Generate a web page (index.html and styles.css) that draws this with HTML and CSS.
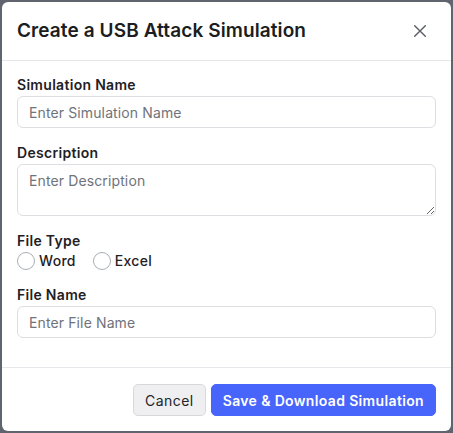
FILE: index.html
```
<!DOCTYPE html>
<html>
<head>
<meta charset="utf-8">
<link rel="stylesheet" href="styles.css">
</head>
<body>
<div class="backdrop">
  <div class="modal">
    <div class="modal-header">
      <h5 class="modal-title">Create a USB Attack Simulation</h5>
      <button class="close" aria-label="Close">
        <svg width="12" height="12" viewBox="0 0 12 12"><path d="M0.7 0.7 L11.3 11.3 M11.3 0.7 L0.7 11.3" stroke="#5a5d63" stroke-width="1.4" fill="none" stroke-linecap="round"/></svg>
      </button>
    </div>
    <div class="modal-body">
      <div class="group">
        <label class="label">Simulation Name</label>
        <input class="control" type="text" placeholder="Enter Simulation Name">
      </div>
      <div class="group">
        <label class="label">Description</label>
        <textarea class="control area" placeholder="Enter Description"></textarea>
      </div>
      <div class="group">
        <label class="label">File Type</label>
        <div class="radios">
          <label class="radio"><input type="radio" name="ft"><span>Word</span></label>
          <label class="radio"><input type="radio" name="ft"><span>Excel</span></label>
        </div>
      </div>
      <div class="group">
        <label class="label">File Name</label>
        <input class="control" type="text" placeholder="Enter File Name">
      </div>
    </div>
    <div class="modal-footer">
      <button class="btn btn-cancel">Cancel</button>
      <button class="btn btn-primary">Save &amp; Download Simulation</button>
    </div>
  </div>
</div>
</body>
</html>
```
FILE: styles.css
```
* { box-sizing: border-box; }
html, body { margin: 0; padding: 0; }
body {
  background: #60646e;
  font-family: "Inter", "Noto Sans", sans-serif;
  color: #212529;
  width: 453px;
  height: 433px;
  overflow: hidden;
}
.backdrop {
  padding: 2px;
}
.modal {
  width: 449px;
  height: 429px;
  background: #fff;
  border-radius: 6px;
  display: flex;
  flex-direction: column;
  overflow: hidden;
}
.modal-header {
  display: flex;
  align-items: center;
  justify-content: space-between;
  padding: 16px 15px;
  height: 59px;
  border-bottom: 1px solid #e6e7ea;
}
.modal-title {
  margin: 0;
  font-size: 19px;
  font-weight: 600;
  letter-spacing: 0.1px;
  line-height: 26px;
  color: #1b1d20;
}
.close {
  border: 0;
  background: transparent;
  padding: 0;
  width: 12px;
  height: 12px;
  margin-right: 10px;
  display: flex;
}
.modal-body {
  padding: 13px 15px 1px;
}
.group {
  margin-bottom: 14px;
}
.label {
  display: block;
  font-size: 14px;
  font-weight: 600;
  letter-spacing: 0.3px;
  line-height: 21px;
  margin-bottom: 1px;
  color: #1f2124;
}
.control {
  display: block;
  width: 100%;
  height: 32px;
  border: 1px solid #dcdee2;
  border-radius: 6px;
  padding: 0 11px;
  font-family: inherit;
  font-size: 14px;
  letter-spacing: 0.12px;
  color: #212529;
  background: #fff;
  outline: none;
}
.control::placeholder { color: #6f737a; opacity: 1; }
.area {
  height: 52px;
  padding: 5px 11px;
  line-height: 21px;
  resize: vertical;
}
.radios {
  display: flex;
  gap: 17px;
  height: 18px;
  align-items: center;
}
.radio {
  display: flex;
  align-items: center;
  gap: 4px;
  font-size: 14px;
  letter-spacing: 0.3px;
  font-weight: 500;
  color: #1f2124;
  line-height: 18px;
}
.radio input {
  appearance: none;
  -webkit-appearance: none;
  margin: 0;
  width: 18px;
  height: 18px;
  border: 1px solid #a9aeb5;
  border-radius: 50%;
  background: #fff;
}
.modal-footer {
  margin-top: auto;
  border-top: 1px solid #e6e7ea;
  padding: 16px 15px 15px;
  display: flex;
  justify-content: flex-end;
  gap: 5px;
}
.btn {
  height: 32px;
  border-radius: 5px;
  font-family: inherit;
  font-size: 14px;
  padding: 0 11px;
  cursor: pointer;
}
.btn-cancel {
  background: #efeff1;
  border: 1px solid #d6d8dc;
  color: #212529;
  letter-spacing: 0.45px;
  padding: 0 11px;
}
.btn-primary {
  background: #4764fb;
  border: 1px solid #4764fb;
  color: #fff;
  font-weight: 600;
  letter-spacing: 0.35px;
  padding: 0 11px;
}
```
